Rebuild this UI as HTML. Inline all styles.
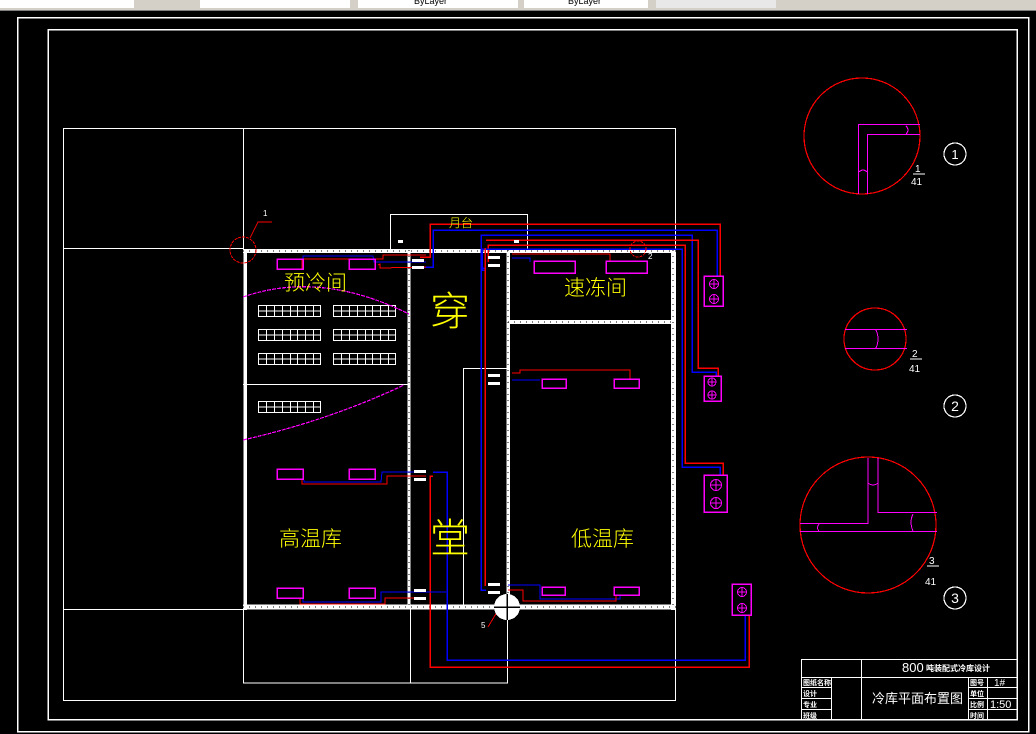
<!DOCTYPE html>
<html><head><meta charset="utf-8"><style>
html,body{margin:0;padding:0;background:#000;width:1036px;height:734px;overflow:hidden}
svg{display:block}
text{font-family:"Liberation Sans","Noto Sans CJK SC",sans-serif}
</style></head><body>
<svg width="1036" height="734" viewBox="0 0 1036 734" xmlns="http://www.w3.org/2000/svg" shape-rendering="crispEdges">
<rect x="0" y="0" width="1036" height="734" fill="#000"/>
<!-- toolbar -->
<rect x="0" y="0" width="1036" height="11" fill="#d4d0c8"/>
<rect x="0" y="0" width="134" height="8" fill="#fff"/>
<rect x="200" y="0" width="150" height="8" fill="#fff"/>
<rect x="358" y="0" width="160" height="8" fill="#fff"/>
<rect x="524" y="0" width="124" height="8" fill="#fff"/>
<rect x="656" y="0" width="120" height="8" fill="#e8e8e8"/>
<text x="414" y="4" font-size="9" fill="#000">ByLayer</text>
<text x="568" y="4" font-size="9" fill="#000">ByLayer</text>
<rect x="0" y="10" width="1036" height="1" fill="#808080"/>
<g fill="none" stroke="#fff" stroke-width="1.5">
<rect x="17.5" y="17.5" width="1011" height="714"/>
<rect x="48" y="29.5" width="969" height="690"/>
</g>
<!-- site lines -->
<g fill="none" stroke="#fff" stroke-width="1">
<rect x="63.5" y="128.5" width="612" height="572"/>
<line x1="243.5" y1="128" x2="243.5" y2="250"/>
<line x1="63" y1="248.5" x2="243" y2="248.5"/>
<line x1="63" y1="609.5" x2="243" y2="609.5"/>
<rect x="243.5" y="607" width="264" height="76"/>
<line x1="410.5" y1="607" x2="410.5" y2="683"/>
<rect x="390.5" y="214.5" width="137" height="36"/>
<polyline points="463.5,607 463.5,368.5 508,368.5"/>
<line x1="243" y1="384.5" x2="409" y2="384.5"/>
</g>
<!-- walls -->
<g stroke="#fff" fill="none">
<line x1="243" y1="251" x2="676" y2="251" stroke-width="4"/>
<line x1="243" y1="607" x2="676" y2="607" stroke-width="5"/>
<line x1="245" y1="250" x2="245" y2="610" stroke-width="3.5"/>
<line x1="409" y1="250" x2="409" y2="607" stroke-width="3"/>
<line x1="508" y1="250" x2="508" y2="607" stroke-width="3.5"/>
<line x1="673" y1="250" x2="673" y2="610" stroke-width="4"/>
<line x1="508" y1="322" x2="673" y2="322" stroke-width="4"/>
</g>
<g stroke="#000" stroke-width="1.2" stroke-dasharray="1 5" fill="none">
<line x1="243" y1="251" x2="676" y2="251"/>
<line x1="243" y1="607" x2="676" y2="607"/>
<line x1="409" y1="250" x2="409" y2="607"/>
<line x1="508" y1="250" x2="508" y2="607"/>
<line x1="673" y1="250" x2="673" y2="607"/>
<line x1="508" y1="322" x2="673" y2="322"/>
</g>
<!-- shelves -->
<g fill="none" stroke="#fff" stroke-width="1">
<g id="sh">
<rect x="258.5" y="305.5" width="62" height="11"/>
<line x1="258" y1="311" x2="321" y2="311"/>
<path d="M266.5 305v11M274.5 305v11M282.5 305v11M290.5 305v11M297.5 305v11M305.5 305v11M313.5 305v11"/>
</g>
<use href="#sh" x="75"/>
<use href="#sh" y="24"/><use href="#sh" x="75" y="24"/>
<use href="#sh" y="48"/><use href="#sh" x="75" y="48"/>
<use href="#sh" y="96"/>
</g>
<!-- magenta arcs -->
<g fill="none" stroke="#f0f" stroke-width="1.2" stroke-dasharray="4 1">
<path d="M243 297 Q320 270 409 314"/>
<path d="M243 440 Q330 420 404 385"/>
</g>
<!-- pipes -->
<g fill="none" stroke-width="1.5">
<polyline stroke="#f00" points="420,257 430,257 430,224 720,224 720,276"/>
<polyline stroke="#00f" points="420,267 433,267 433,230 717,230 717,276"/>
<polyline stroke="#00f" points="485,268 481,268 481,235 692,235 692,372 716,372 716,377"/>
<polyline stroke="#f00" points="486,240 698,240 698,368 718,368 718,377"/>
<polyline stroke="#f00" points="488,262 488,245 685,245 685,463 723,463 723,476"/>
<polyline stroke="#00f" points="486,270 482,270 482,249 682,249 682,467 720,467 720,476"/>
<polyline stroke="#f00" points="486,585 485,585 485,248"/>
<polyline stroke="#00f" points="486,590 481,590 481,248"/>
<polyline stroke="#f00" points="433,476 430,476 430,667 749,667 749,615"/>
<polyline stroke="#00f" points="433,472 447,472 447,660 745,660 745,615"/>
<polyline stroke="#f00" stroke-width="1" points="302,270 302,259 383,259 383,255 426,255"/>
<polyline stroke="#00f" stroke-width="1" points="303,268 303,256 373,256 374,262 426,262"/>
<polyline stroke="#f00" stroke-width="1" points="378,265 380,264 380,268 426,267"/>
<polyline stroke="#f00" stroke-width="1" points="512,373 520,373 520,370 630,370 630,380"/>
<polyline stroke="#00f" stroke-width="1" points="512,380 540,380"/>
<polyline stroke="#f00" stroke-width="1" points="512,254 525,254 525,254 610,254 610,262"/>
<polyline stroke="#00f" stroke-width="1" points="512,258 530,258 530,262"/>
<polyline stroke="#f00" stroke-width="1" points="302,480 302,484 387,484 387,476 426,476"/>
<polyline stroke="#00f" stroke-width="1" points="304,480 304,482 381,482 382,472 426,472"/>
<polyline stroke="#f00" stroke-width="1" points="300,598 300,604 385,604 385,598 426,598"/>
<polyline stroke="#00f" stroke-width="1" points="303,598 303,602 381,602 381,592 430,592 446,592"/>
<polyline stroke="#00f" stroke-width="1" points="508,585 540,585 540,599 620,599 620,596"/>
<polyline stroke="#f00" stroke-width="1" points="508,590 523,590 523,601 616,601 616,596"/>
</g>
<!-- valve marks -->
<g fill="#fff">
<rect x="412" y="259" width="12" height="3"/><rect x="412" y="266" width="12" height="3"/>
<rect x="488" y="256" width="12" height="3"/><rect x="488" y="264" width="12" height="3"/>
<rect x="488" y="374" width="12" height="3"/><rect x="488" y="382" width="12" height="3"/>
<rect x="414" y="470" width="12" height="3"/><rect x="414" y="478" width="12" height="3"/>
<rect x="414" y="589" width="12" height="3"/><rect x="414" y="597" width="12" height="3"/>
<rect x="488" y="583" width="12" height="3"/><rect x="488" y="591" width="12" height="3"/>
<rect x="398" y="240" width="5" height="3"/><rect x="514" y="240" width="5" height="3"/>
</g>
<!-- evaporator units -->
<g fill="none" stroke="#f0f" stroke-width="1.5">
<rect x="277" y="259" width="26" height="10"/><rect x="349" y="259" width="26" height="10"/>
<rect x="534" y="261" width="41" height="12"/><rect x="606" y="261" width="41" height="12"/>
<rect x="542" y="379" width="24" height="9"/><rect x="614" y="379" width="25" height="9"/>
<rect x="277" y="469" width="26" height="10"/><rect x="349" y="469" width="26" height="10"/>
<rect x="277" y="588" width="26" height="10"/><rect x="349" y="588" width="26" height="10"/>
<rect x="542" y="587" width="23" height="8"/><rect x="614" y="587" width="25" height="8"/>
<rect x="704" y="276" width="19" height="30"/>
<rect x="704" y="376" width="17" height="25"/>
<rect x="704" y="475" width="23" height="37"/>
<rect x="732" y="584" width="19" height="31"/>
</g>
<g fill="none" stroke="#f0f" stroke-width="1">
<circle cx="714" cy="284" r="4.5"/><path d="M709.5 284h9M714 279.5v9"/>
<circle cx="714" cy="299" r="4.5"/><path d="M709.5 299h9M714 294.5v9"/>
<circle cx="712" cy="382" r="4"/><path d="M708 382h8M712 378v8"/>
<circle cx="712" cy="395" r="4"/><path d="M708 395h8M712 391v8"/>
<circle cx="716" cy="485" r="5.5"/><path d="M710.5 485h11M716 479.5v11"/>
<circle cx="716" cy="503" r="5.5"/><path d="M710.5 503h11M716 497.5v11"/>
<circle cx="742" cy="592" r="4.5"/><path d="M737.5 592h9M742 587.5v9"/>
<circle cx="742" cy="608" r="4.5"/><path d="M737.5 608h9M742 603.5v9"/>
</g>
<!-- markers -->
<g fill="none" stroke="#f00" stroke-width="1">
<circle cx="243" cy="250" r="13" stroke-dasharray="3 1"/>
<polyline points="250,238 258,222 272,222"/>
<circle cx="638" cy="249" r="8" stroke-dasharray="3 1"/>
<polyline points="488,627 497,612"/>
</g>
<circle cx="507" cy="607" r="13" fill="#fff"/>
<path d="M494 607h26M507 594v26" stroke="#000" stroke-width="1.5"/>
<!-- detail circles -->
<g fill="none" stroke="#f00" stroke-width="1.2">
<circle cx="862" cy="136" r="58"/>
<circle cx="875" cy="339" r="31"/>
<circle cx="868" cy="525" r="68"/>
</g>
<g fill="none" stroke="#f0f" stroke-width="1">
<polyline points="858.5,194 858.5,124.5 920,124.5"/>
<polyline points="867.5,194 867.5,134.5 920,134.5"/>
<path d="M906 126q4 4 0 8M859 172q4-4 8 0"/>
<path d="M845 329.5h62M845 348.5h62M876 330q4 9 0 18"/>
<path d="M868 458v65.5h-68M878 458v54.5h59M800 531.5h137"/>
<path d="M868 483q5 4 10 0M913 514q-4 8 0 17M819 524q-3 4 0 7"/>
</g>
<g fill="none" stroke="#fff" stroke-width="1.2">
<circle cx="955" cy="154" r="11"/><circle cx="955" cy="406" r="11"/><circle cx="955" cy="598" r="11"/>
<path d="M913 174h12M910 359h12M927 566h12"/>
</g>
<g fill="#fff" font-size="10">
<text x="955" y="159" text-anchor="middle" font-size="13">1</text>
<text x="955" y="411" text-anchor="middle" font-size="14">2</text>
<text x="955" y="603" text-anchor="middle" font-size="14">3</text>
<text x="915" y="172">1</text><text x="911" y="185">41</text>
<text x="912" y="357">2</text><text x="909" y="372">41</text>
<text x="929" y="564">3</text><text x="925" y="585">41</text>
<text x="263" y="216" font-size="8">1</text>
<text x="481" y="628" font-size="8">5</text>
<text x="648" y="259" font-size="8">2</text>
</g>
<!-- room labels -->
<g fill="#ff0" font-family="'Noto Sans CJK SC',sans-serif" font-weight="200">
<text x="284" y="290" font-size="21">预冷间</text>
<text x="564" y="295" font-size="21">速冻间</text>
<text x="279" y="546" font-size="21">高温库</text>
<text x="571" y="546" font-size="21">低温库</text>
<text x="430" y="325" font-size="40">穿</text>
<text x="430" y="552" font-size="40">堂</text>
<text x="449" y="227" font-size="12">月台</text>
</g>
<!-- title block -->
<g fill="none" stroke="#fff" stroke-width="1">
<rect x="801.5" y="659.5" width="216" height="60"/>
<path d="M801 677.5h216M861.5 659v61M831.5 677v43M801 687.5h30M801 698.5h30M801 709.5h30M968.5 677v43M987.5 677v43M968 687.5h49M968 698.5h49M968 709.5h49"/>
</g>
<g fill="#fff" font-family="'Noto Sans CJK SC',sans-serif">
<text x="902" y="672" font-size="13">800</text>
<text x="926" y="671" font-size="8" font-weight="bold">吨装配式冷库设计</text>
<text x="872" y="703" font-size="13">冷库平面布置图</text>
<text x="803" y="685" font-size="7" font-weight="bold">图纸名称</text>
<text x="803" y="696" font-size="7" font-weight="bold">设计</text>
<text x="803" y="707" font-size="7" font-weight="bold">专业</text>
<text x="803" y="718" font-size="7" font-weight="bold">班级</text>
<text x="970" y="685" font-size="7" font-weight="bold">图号</text>
<text x="970" y="696" font-size="7" font-weight="bold">单位</text>
<text x="970" y="707" font-size="7" font-weight="bold">比例</text>
<text x="970" y="718" font-size="7" font-weight="bold">时间</text>
<text x="994" y="686" font-size="10">1#</text>
<text x="990" y="708" font-size="11">1:50</text>
</g>
</svg>
</body></html>
